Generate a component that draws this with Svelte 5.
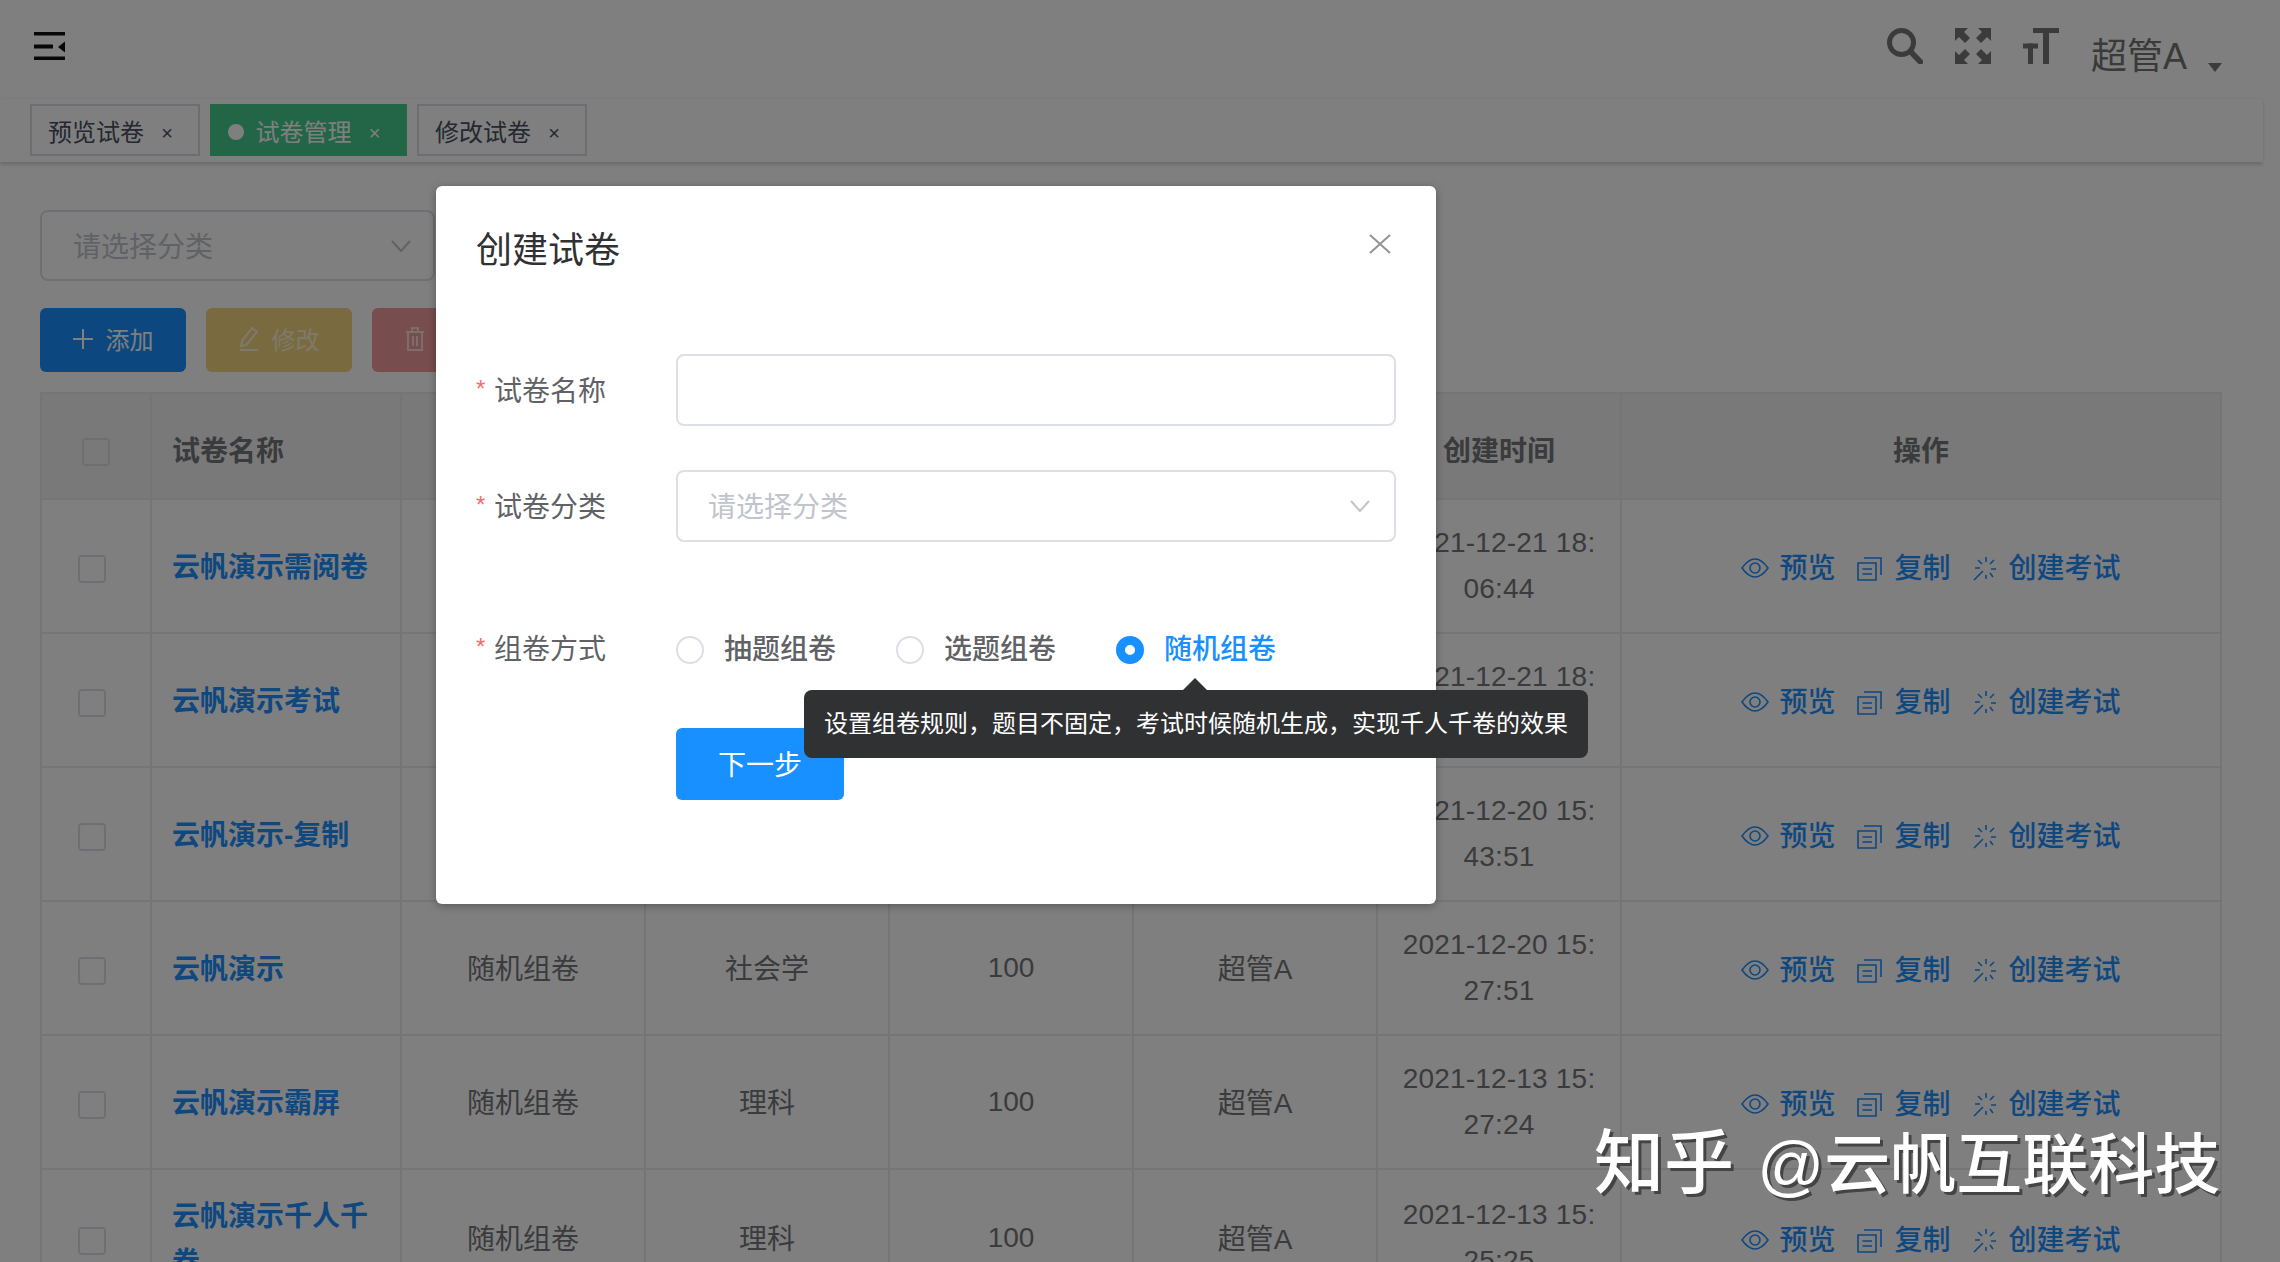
<script>
  const tags = [
    { name: '预览试卷' },
    { name: '试卷管理', active: true },
    { name: '修改试卷' }
  ];

  const columns = ['试卷名称', '组卷方式', '试卷分类', '试卷总分', '创建人', '创建时间', '操作'];

  const rows = [
    { name: '云帆演示需阅卷', type: '随机组卷', cat: '理科', score: 100, user: '超管A', date: ['2021-12-21 18:', '06:44'] },
    { name: '云帆演示考试', type: '随机组卷', cat: '理科', score: 100, user: '超管A', date: ['2021-12-21 18:', '02:17'] },
    { name: '云帆演示-复制', type: '随机组卷', cat: '理科', score: 100, user: '超管A', date: ['2021-12-20 15:', '43:51'] },
    { name: '云帆演示', type: '随机组卷', cat: '社会学', score: 100, user: '超管A', date: ['2021-12-20 15:', '27:51'] },
    { name: '云帆演示霸屏', type: '随机组卷', cat: '理科', score: 100, user: '超管A', date: ['2021-12-13 15:', '27:24'] },
    { name: '云帆演示千人千卷', type: '随机组卷', cat: '理科', score: 100, user: '超管A', date: ['2021-12-13 15:', '25:25'], tall: true }
  ];

  const radios = [
    { label: '抽题组卷' },
    { label: '选题组卷' },
    { label: '随机组卷', checked: true }
  ];
</script>

<div class="page">
  <header class="topbar">
    <svg class="hamburger" viewBox="0 0 31 28" width="31" height="28">
      <rect x="0" y="0" width="31" height="3.5" />
      <rect x="0" y="12.5" width="19" height="4" />
      <path d="M31 9.5 L24 15 L31 20.5 Z" />
      <rect x="0" y="24.5" width="31" height="3.5" />
    </svg>
    <div class="top-right">
      <svg class="top-icon" viewBox="0 0 36 36" width="36" height="36">
        <circle cx="14.5" cy="14.5" r="12" fill="none" stroke-width="5" />
        <line x1="23.5" y1="23.5" x2="33.5" y2="34" stroke-width="5.5" stroke-linecap="round" />
      </svg>
      <svg class="top-icon solid" viewBox="0 0 36 36" width="36" height="36">
        <path d="M0 0 H13 L9 4 L15 10 L10 15 L4 9 L0 13 Z" />
        <path d="M36 0 H23 L27 4 L21 10 L26 15 L32 9 L36 13 Z" />
        <path d="M0 36 H13 L9 32 L15 26 L10 21 L4 27 L0 23 Z" />
        <path d="M36 36 H23 L27 32 L21 26 L26 21 L32 27 L36 23 Z" />
      </svg>
      <svg class="top-icon solid" viewBox="0 0 36 36" width="36" height="36">
        <rect x="10" y="0" width="26" height="5" />
        <rect x="20" y="0" width="6" height="36" />
        <rect x="0" y="15.5" width="15" height="5" />
        <rect x="5" y="15.5" width="5" height="20.5" />
      </svg>
      <span class="user">超管A</span>
      <span class="caret"></span>
    </div>
  </header>

  <nav class="tagbar">
    {#each tags as tag}
      <span class="tag" class:active={tag.active}>
        {#if tag.active}<i class="dot"></i>{/if}
        <span>{tag.name}</span>
        <span class="tag-close">×</span>
      </span>
    {/each}
  </nav>

  <main class="content">
    <div class="filter">
      <span class="placeholder">请选择分类</span>
      <svg class="chevron" viewBox="0 0 20 12" width="20" height="12"><path d="M1 1 L10 11 L19 1" /></svg>
    </div>

    <div class="toolbar">
      <button class="btn add">
        <svg viewBox="0 0 20 20" width="20" height="20"><path d="M10 0 V20 M0 10 H20" /></svg>
        添加
      </button>
      <button class="btn edit">
        <svg viewBox="0 0 20 24" width="20" height="24"><path d="M13 1 L18 5 L7 18 L2 19 L3 14 Z M1 23 H19" /></svg>
        修改
      </button>
      <button class="btn del">
        <svg viewBox="0 0 20 24" width="20" height="24"><path d="M1 5 H19 M7 5 V1 H13 V5 M3 5 V23 H17 V5 M8 9 V19 M12 9 V19" /></svg>
        删除
      </button>
    </div>

    <table class="exam-table">
      <colgroup>
        <col style="width: 110px" />
        <col style="width: 250px" />
        <col style="width: 244px" />
        <col style="width: 244px" />
        <col style="width: 244px" />
        <col style="width: 244px" />
        <col style="width: 244px" />
        <col style="width: 600px" />
      </colgroup>
      <thead>
        <tr>
          <th class="check"><span class="checkbox head"></span></th>
          {#each columns as col, i}
            <th class:left={i === 0}>{col}</th>
          {/each}
        </tr>
      </thead>
      <tbody>
        {#each rows as row}
          <tr class:tall={row.tall}>
            <td class="check"><span class="checkbox"></span></td>
            <td class="name">{row.name}</td>
            <td>{row.type}</td>
            <td>{row.cat}</td>
            <td class="latin">{row.score}</td>
            <td>{row.user}</td>
            <td class="latin date">{row.date[0]}<br />{row.date[1]}</td>
            <td class="actions">
              <div class="action-group">
                <span class="action">
                  <svg class="eye" viewBox="0 0 28 20" width="28" height="20">
                    <path d="M1 10 C6 3 10 1 14 1 C18 1 22 3 27 10 C22 17 18 19 14 19 C10 19 6 17 1 10 Z" />
                    <circle cx="14" cy="10" r="5" />
                  </svg>
                  <span class="action-text">预览</span>
                </span>
                <span class="action">
                  <svg viewBox="0 0 25 25" width="25" height="25">
                    <path d="M1 7 H19 V24 H1 Z M7 2 H24 V19 M5.5 13 H15 M5.5 18 H15" />
                  </svg>
                  <span class="action-text">复制</span>
                </span>
                <span class="action">
                  <svg viewBox="0 0 24 25" width="24" height="25">
                    <path d="M13 1 V6 M21 4 L17 8 M23 13 H18 M20 21 L17 17 M13 23 V19 M9 8 L5 4 M7 12 H2 M10 15 L1 24" />
                  </svg>
                  <span class="action-text">创建考试</span>
                </span>
              </div>
            </td>
          </tr>
        {/each}
      </tbody>
    </table>
  </main>

  <div class="mask"></div>

  <section class="modal">
    <h2 class="modal-title">创建试卷</h2>
    <svg class="modal-close" viewBox="0 0 22 20" width="22" height="20"><path d="M1 1 L21 19 M21 1 L1 19" /></svg>

    <form class="form">
      <div class="row">
        <span class="label"><i>*</i>试卷名称</span>
        <div class="control input"></div>
      </div>
      <div class="row">
        <span class="label"><i>*</i>试卷分类</span>
        <div class="control input select">
          <span class="placeholder">请选择分类</span>
          <svg class="chevron" viewBox="0 0 20 12" width="20" height="12"><path d="M1 1 L10 11 L19 1" /></svg>
        </div>
      </div>
      <div class="row radio-row">
        <span class="label"><i>*</i>组卷方式</span>
        <div class="control radios">
          {#each radios as radio}
            <span class="radio" class:checked={radio.checked}>
              <i class="circle"></i>
              <span class="radio-text">{radio.label}</span>
            </span>
          {/each}
        </div>
      </div>
      <div class="row next-row">
        <span class="label"></span>
        <div class="control"><span class="next">下一步</span></div>
      </div>
    </form>

    <div class="tooltip">设置组卷规则，题目不固定，考试时候随机生成，实现千人千卷的效果</div>
  </section>

  <div class="watermark"><span class="brand">知乎</span> @云帆互联科技</div>
</div>

<style>
  :global(body) {
    margin: 0;
    overflow: hidden;
    background: #fff;
  }

  .page {
    position: relative;
    width: 2280px;
    height: 1262px;
    overflow: hidden;
    background: #fff;
    font-family: "Liberation Sans", "Noto Sans CJK SC", sans-serif;
    font-size: 28px;
    color: #74767a;
  }

  /* top bar */
  .topbar {
    width: 2263px;
    height: 97px;
    box-sizing: border-box;
    display: flex;
    justify-content: space-between;
    padding: 28px 0 0 34px;
    box-shadow: 0 2px 2px rgba(0, 0, 0, 0.03);
  }

  .hamburger {
    margin-top: 4px;
    fill: #111;
  }

  .top-right {
    display: flex;
    align-items: flex-start;
    margin-right: 41px;
  }

  .top-icon {
    stroke: #777;
    fill: none;
    margin-right: 32px;
  }

  .top-icon:first-child {
    margin-left: -1px;
  }

  .top-icon.solid {
    fill: #777;
    stroke: none;
  }

  .user {
    font-size: 36px;
    line-height: 52px;
    padding-top: 3px;
    color: #757575;
  }

  .caret {
    width: 0;
    height: 0;
    margin: 35px 0 0 21px;
    border-left: 7.5px solid transparent;
    border-right: 7.5px solid transparent;
    border-top: 9px solid #777;
  }

  /* tag strip */
  .tagbar {
    width: 2263px;
    height: 65px;
    box-sizing: border-box;
    display: flex;
    gap: 10px;
    padding: 7px 0 0 30px;
    box-shadow: 0 3px 3px rgba(0, 0, 0, 0.14);
  }

  .tag {
    height: 52px;
    box-sizing: border-box;
    display: flex;
    align-items: center;
    padding: 0 19.5px 0 16px;
    border: 2px solid #d8dce5;
    font-size: 24px;
    color: #495060;
  }

  .tag.active {
    background: #46cc8e;
    border-color: #46cc8e;
    color: #fff;
  }

  .dot {
    width: 16px;
    height: 16px;
    border-radius: 50%;
    background: #fff;
    margin: 4px 12px 0 0;
  }

  .tag-close {
    width: 22px;
    margin-left: 12px;
    font-size: 20px;
    text-align: center;
    line-height: 22px;
    padding-top: 6px;
  }

  /* page content */
  .content {
    padding: 48px 0 0 40px;
  }

  .filter {
    width: 395px;
    height: 71px;
    box-sizing: border-box;
    display: flex;
    align-items: center;
    justify-content: space-between;
    padding: 0 22px 0 31px;
    border: 2px solid #dcdfe6;
    border-radius: 8px;
    color: #c0c4cc;
  }

  .placeholder {
    padding-bottom: 2px;
  }

  .chevron {
    fill: none;
    stroke: #c0c4cc;
    stroke-width: 2;
  }

  .toolbar {
    display: flex;
    gap: 20px;
    margin: 27px 0 20px;
  }

  .btn {
    width: 146px;
    height: 64px;
    display: flex;
    align-items: center;
    justify-content: center;
    gap: 13px;
    padding: 0 0 3px;
    border: none;
    border-radius: 6px;
    font: inherit;
    font-size: 24px;
    color: #fff;
  }

  .btn svg {
    fill: none;
    stroke: currentColor;
    stroke-width: 2;
  }

  .btn.add {
    background: #1890ff;
  }

  .btn.edit {
    background: #f3d77e;
    color: #fdf3d8;
  }

  .btn.del {
    background: #f09a9a;
    color: #fbdcdc;
  }

  /* table */
  .exam-table {
    width: 2181px;
    table-layout: fixed;
    border-collapse: separate;
    border-spacing: 0;
    border-top: 2px solid #ebebeb;
    border-left: 2px solid #ebebeb;
  }

  th,
  td {
    box-sizing: border-box;
    padding: 4px 12px 0;
    border-right: 2px solid #ebebeb;
    border-bottom: 2px solid #ebebeb;
    text-align: center;
    vertical-align: middle;
    line-height: 46px;
    font-weight: 400;
  }

  th {
    height: 106px;
    padding-top: 12px;
    background: #f2f2f2;
    font-weight: 700;
    color: #74767a;
  }

  th.left,
  td.name {
    text-align: left;
    padding-left: 20px;
    padding-right: 20px;
  }

  td {
    height: 134px;
  }

  tr.tall td {
    height: 138px;
  }

  td.latin {
    padding-top: 0;
  }

  td.date {
    letter-spacing: 0.2px;
  }

  td.name {
    color: #1f8fff;
    font-weight: 700;
  }

  td.check,
  th.check {
    padding: 0;
  }

  .checkbox {
    display: inline-block;
    width: 28px;
    height: 28px;
    box-sizing: border-box;
    border: 2px solid #dcdfe6;
    border-radius: 4px;
    margin: 2px 8px 0 0;
    vertical-align: middle;
  }

  .checkbox.head {
    margin: 8px 0 0;
  }

  td.actions {
    padding: 4px 0 0 20px;
    color: #1f8fff;
    font-weight: 500;
    white-space: nowrap;
  }

  .action-group {
    display: flex;
    justify-content: center;
    gap: 22px;
  }

  .action {
    display: flex;
    align-items: center;
    gap: 12px;
  }

  .action-text {
    padding-top: 2px;
  }

  .action svg {
    fill: none;
    stroke: currentColor;
    stroke-width: 1.6;
  }

  .action svg.eye {
    margin-right: -2px;
  }

  /* dialog */
  .mask {
    position: absolute;
    inset: 0;
    background: rgba(0, 0, 0, 0.5);
  }

  .modal {
    position: absolute;
    left: 436px;
    top: 186px;
    width: 1000px;
    height: 718px;
    box-sizing: border-box;
    padding: 40px 40px 0;
    background: #fff;
    border-radius: 6px;
    box-shadow: 0 2px 8px rgba(0, 0, 0, 0.3);
    color: #606266;
  }

  .modal-title {
    margin: 0;
    padding-top: 3px;
    font-size: 36px;
    line-height: 44px;
    font-weight: 400;
    color: #303133;
  }

  .modal-close {
    position: absolute;
    right: 45px;
    top: 48px;
    fill: none;
    stroke: #909399;
    stroke-width: 2;
  }

  .form {
    margin-top: 81px;
    display: flex;
    flex-direction: column;
    gap: 44px;
  }

  .row {
    display: flex;
    align-items: center;
    height: 72px;
  }

  .radio-row {
    margin-top: 27px;
  }

  .next-row {
    margin-top: -1px;
  }

  .label {
    width: 200px;
    flex: none;
    display: flex;
    align-items: center;
    padding-bottom: 3px;
    font-weight: 400;
  }

  .radio-row .label {
    padding-bottom: 5px;
  }

  .label i {
    width: 18px;
    color: #f56c6c;
    font-style: normal;
    font-size: 24px;
  }

  .control {
    flex: 1;
  }

  .input {
    height: 72px;
    box-sizing: border-box;
    border: 2px solid #dcdfe6;
    border-radius: 8px;
  }

  .select {
    display: flex;
    align-items: center;
    justify-content: space-between;
    padding: 0 24px 0 30px;
    color: #c0c4cc;
  }

  .radios {
    display: flex;
    gap: 60px;
  }

  .radio {
    display: flex;
    align-items: center;
    gap: 20px;
    font-weight: 500;
  }

  .radio-text {
    padding-bottom: 5px;
  }

  .radio.checked {
    color: #1890ff;
  }

  .circle {
    width: 28px;
    height: 28px;
    margin-top: 2px;
    box-sizing: border-box;
    border: 2px solid #dcdfe6;
    border-radius: 50%;
  }

  .radio.checked .circle {
    border: 9.5px solid #1890ff;
    background: #fff;
  }

  .next {
    display: flex;
    align-items: center;
    justify-content: center;
    width: 168px;
    height: 72px;
    box-sizing: border-box;
    padding-bottom: 2px;
    border-radius: 6px;
    background: #1890ff;
    color: #fff;
  }

  .tooltip {
    position: absolute;
    left: 368px;
    top: 504px;
    width: 784px;
    height: 68px;
    box-sizing: border-box;
    padding: 0 20px;
    background: #303133;
    border-radius: 8px;
    color: #fff;
    font-size: 24px;
    line-height: 68px;
    white-space: nowrap;
  }

  .tooltip::before {
    content: "";
    position: absolute;
    left: 379px;
    top: -12px;
    border-left: 12px solid transparent;
    border-right: 12px solid transparent;
    border-bottom: 12px solid #303133;
  }

  .watermark {
    position: absolute;
    left: 1594px;
    top: 1120px;
    font-size: 66px;
    line-height: 88px;
    font-weight: 500;
    color: #fff;
    white-space: nowrap;
    word-spacing: 5px;
    text-shadow: 3px 3px 0 #444;
  }

  .brand {
    font-size: 70px;
  }
</style>
